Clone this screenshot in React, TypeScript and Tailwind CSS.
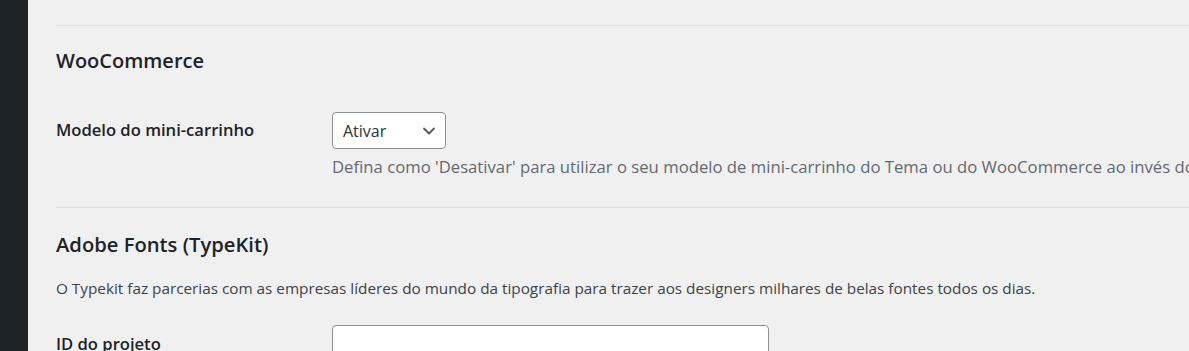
import React from 'react';

const font = { fontFamily: '"Open Sans", "Noto Sans", sans-serif' };

const Chevron: React.FC = () => (
  <svg width="14" height="14" viewBox="0 0 14 14" fill="none" className="shrink-0">
    <path d="M2 4.5 L7 9.5 L12 4.5" stroke="#50575e" strokeWidth="1.8" strokeLinecap="round" strokeLinejoin="round" />
  </svg>
);

export default function App() {
  return (
    <div className="flex h-[351px] w-full overflow-hidden bg-[#f0f0f1]" style={font}>
      <aside className="w-[28px] shrink-0 bg-[#1d2327]" />
      <main className="min-w-0 flex-1 pl-[28px]">
        <div className="h-[25px]" />
        <section className="border-t border-[#dcdcde]">
          <h2 className="mt-[22px] text-[20px] font-semibold leading-[26px] text-[#1d2327]">WooCommerce</h2>
          <div className="mt-[38px] flex items-start">
            <label className="w-[276px] shrink-0 pt-[8px] text-[16.6px] font-semibold leading-[20px] text-[#1d2327]">
              Modelo do mini-carrinho
            </label>
            <div className="min-w-0">
              <button
                type="button"
                className="flex h-[37px] w-[114px] items-center justify-between rounded-[4px] border border-[#8c8f94] bg-white pl-[10px] pr-[9px] text-[16px] text-[#2c3338]"
              >
                <span>Ativar</span>
                <Chevron />
              </button>
              <p className="mt-[6px] whitespace-nowrap text-[16.7px] leading-[24px] text-[#646970]">
                Defina como 'Desativar' para utilizar o seu modelo de mini-carrinho do Tema ou do WooCommerce ao invés do modelo padrão.
              </p>
            </div>
          </div>
        </section>
        <section className="mt-[28px] border-t border-[#dcdcde]">
          <h2 className="mt-[23px] text-[20.2px] font-semibold leading-[26px] text-[#1d2327]">Adobe Fonts (TypeKit)</h2>
          <p className="mt-[20px] whitespace-nowrap text-[15.3px] leading-[22px] text-[#3c434a]">
            O Typekit faz parcerias com as empresas líderes do mundo da tipografia para trazer aos designers milhares de belas fontes todos os dias.
          </p>
          <div className="mt-[26px] flex items-start">
            <label className="w-[276px] shrink-0 pt-[9px] text-[16.6px] font-semibold leading-[20px] text-[#1d2327]">
              ID do projeto
            </label>
            <input
              type="text"
              className="h-[37px] w-[437px] rounded-[4px] border border-[#8c8f94] bg-white px-2 text-[16px]"
            />
          </div>
        </section>
      </main>
    </div>
  );
}
